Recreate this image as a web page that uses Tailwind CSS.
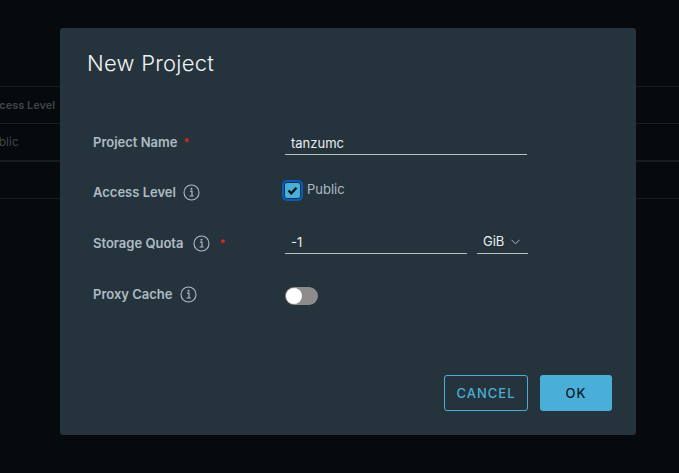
<!DOCTYPE html>
<html lang="en">
<head>
    <meta charset="UTF-8">
    <script src="https://cdn.jsdelivr.net/npm/@tailwindcss/browser@4"></script>
    <title>New Project</title>
</head>
<body class="bg-[#060a0c] font-['Inter',sans-serif]">
    <div class="relative w-[679px] h-[473px] overflow-hidden">
        <!-- table behind the backdrop -->
        <div class="pt-[86px] text-[#3f4548]">
            <div class="h-[37px] border-t border-[#181d20] flex items-center text-[11px] font-semibold">
                <span class="ml-[-15px]">Access Level</span>
            </div>
            <div class="h-[37px] border-t border-[#181d20] flex items-center text-[12px]">
                <span class="ml-[-16px] mt-[-1px]">Public</span>
            </div>
            <div class="h-[38px] border-t-2 border-[#181d20]"></div>
            <div class="border-t border-[#181d20]"></div>
        </div>

        <!-- dialog -->
        <div class="absolute left-[60px] top-[28px] w-[576px] h-[407px] bg-[#25343c] rounded-[3px] flex flex-col">
            <h1 class="ml-[27px] mt-[19px] h-[32px] leading-[32px] text-[22px] font-light tracking-[0.25px] text-[#f0f3f4]">New Project</h1>

            <div class="ml-[33px] mt-[52px] flex flex-col text-[13px] font-semibold text-[#adbbc4]">
                <div class="flex items-start h-[50px]">
                    <div class="w-[192px] flex pt-[2px] leading-[18px]">
                        <span>Project Name</span>
                        <span class="ml-[6px] text-[11px] text-[#d9281e]">*</span>
                    </div>
                    <div class="w-[242px] h-[24px] border-b border-[#b7c2c8] px-[6px] text-[13px] leading-[24px] font-normal text-[#eaedf0]">tanzumc</div>
                </div>

                <div class="flex items-start h-[51px]">
                    <div class="w-[192px] flex items-center gap-[7px] pt-[2px] leading-[18px]">
                        <span>Access Level</span>
                        <svg class="w-[17px] h-[17px]" viewBox="0 0 17 17" fill="none" stroke="#adbbc4">
                            <circle cx="8.5" cy="8.5" r="7.5" stroke-width="1.1"/>
                            <path d="M7 7.2h2v4.6M6.6 12h4" stroke-width="1.2"/>
                            <circle cx="8.5" cy="4.8" r="1" fill="#adbbc4" stroke="none"/>
                        </svg>
                    </div>
                    <div class="flex items-center">
                        <span class="w-[17px] h-[17px] ml-[-1px] rounded-[3px] bg-[#49afd9] ring-2 ring-[#0b5cb8] border border-[#15324a] flex items-center justify-center">
                            <svg class="w-[11px] h-[11px]" viewBox="0 0 11 11" fill="none" stroke="#0a0f12" stroke-width="2.2">
                                <path d="M1.5 5.5l2.8 2.8 5.2-5.6"/>
                            </svg>
                        </span>
                        <span class="ml-[6px] mt-[-1px] text-[13px] font-normal text-[#adbbc4]">Public</span>
                    </div>
                </div>

                <div class="flex items-start h-[53px]">
                    <div class="w-[192px] flex items-center pt-[2px] leading-[18px]">
                        <span>Storage Quota</span>
                        <svg class="ml-[10px] w-[17px] h-[17px]" viewBox="0 0 17 17" fill="none" stroke="#adbbc4">
                            <circle cx="8.5" cy="8.5" r="7.5" stroke-width="1.1"/>
                            <path d="M7 7.2h2v4.6M6.6 12h4" stroke-width="1.2"/>
                            <circle cx="8.5" cy="4.8" r="1" fill="#adbbc4" stroke="none"/>
                        </svg>
                        <span class="ml-[9px] text-[11px] text-[#d9281e]">*</span>
                    </div>
                    <div class="w-[182px] h-[24px] mt-[-2px] border-b border-[#b7c2c8] px-[6px] text-[13px] leading-[24px] font-normal text-[#eaedf0]">-1</div>
                    <div class="ml-[10px] w-[51px] h-[24px] mt-[-2px] border-b border-[#b7c2c8] pl-[6px] flex items-center gap-[7px] text-[13px] font-normal text-[#eaedf0]">
                        <span>GiB</span>
                        <svg class="w-[9px] h-[6px]" viewBox="0 0 9 6" fill="none" stroke="#adbbc4" stroke-width="1"><path d="M.5 .8l4 4 4-4"/></svg>
                    </div>
                </div>

                <div class="flex items-start">
                    <div class="w-[192px] flex items-center gap-[7px] leading-[18px]">
                        <span>Proxy Cache</span>
                        <svg class="w-[17px] h-[17px]" viewBox="0 0 17 17" fill="none" stroke="#adbbc4">
                            <circle cx="8.5" cy="8.5" r="7.5" stroke-width="1.1"/>
                            <path d="M7 7.2h2v4.6M6.6 12h4" stroke-width="1.2"/>
                            <circle cx="8.5" cy="4.8" r="1" fill="#adbbc4" stroke="none"/>
                        </svg>
                    </div>
                    <div class="w-[33px] h-[18px] mt-[2px] rounded-full bg-[#8c8c8c] p-[1px]">
                        <div class="w-[16px] h-[16px] rounded-full bg-white"></div>
                    </div>
                </div>
            </div>

            <div class="mt-auto mb-[24px] mr-[24px] flex justify-end gap-[12px] text-[13px] font-medium tracking-[1px]">
                <button class="w-[84px] h-[36px] pt-[1px] rounded-[3px] border border-[#49afd9] text-[#49afd9]">CANCEL</button>
                <button class="w-[72px] h-[36px] pt-[1px] rounded-[3px] bg-[#49afd9] text-[#0b1a22]">OK</button>
            </div>
        </div>
    </div>
</body>
</html>
